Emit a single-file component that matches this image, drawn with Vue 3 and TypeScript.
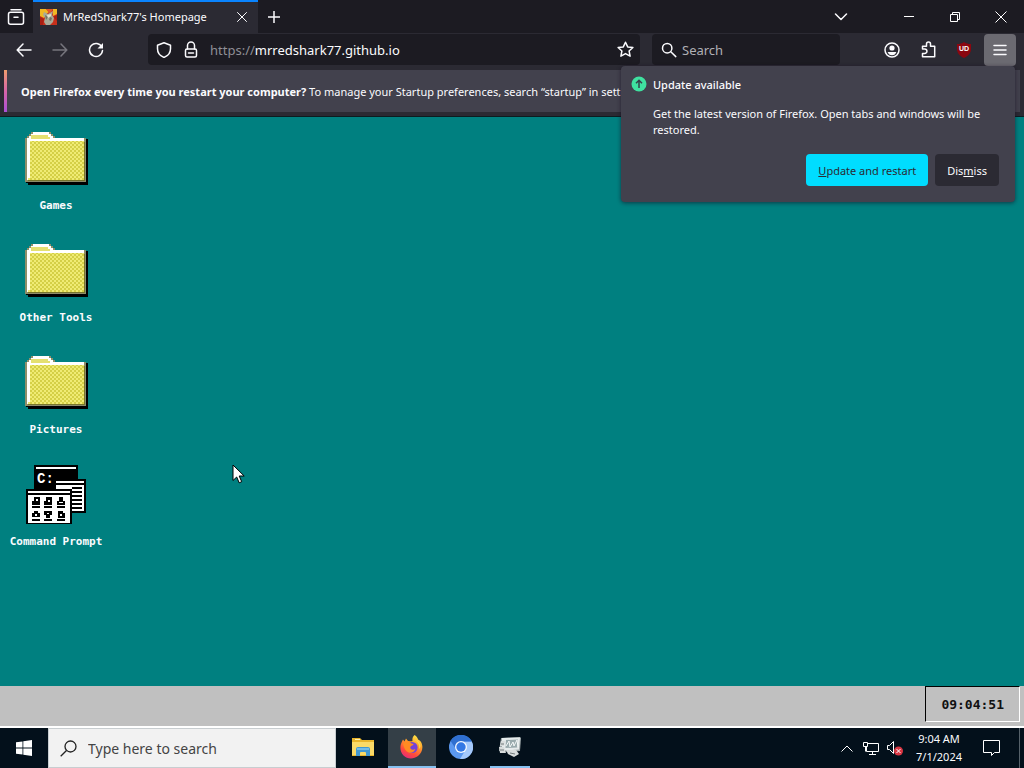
<script setup lang="ts">
import { ref } from 'vue'

interface DesktopItem {
  name: string
  kind: 'folder' | 'prompt'
}

const items: DesktopItem[] = [
  { name: 'Games', kind: 'folder' },
  { name: 'Other Tools', kind: 'folder' },
  { name: 'Pictures', kind: 'folder' },
  { name: 'Command Prompt', kind: 'prompt' },
]

const address = ref('mrredshark77.github.io')
const webQuery = ref('')
const taskQuery = ref('')
</script>

<template>
  <div class="screen">
    <header class="tabs">
      <button class="recent" aria-label="Recent browsing">
        <svg width="18" height="18" viewBox="0 0 18 18" class="line">
          <path d="M4 1.700h10" />
          <rect x="1.500" y="4.200" width="15" height="12" rx="2" />
          <path d="M7 9.200h4" />
        </svg>
      </button>
      <div class="tab">
        <svg width="17" height="16" viewBox="0 0 17 16">
          <rect width="17" height="16" fill="#c8301c" />
          <path d="M0 0h6l3 3-3 2-2 4-4-2zM13 0h4v5l-4 2z" fill="#f0b824" />
          <path d="M6 0h7l-2 3-2 1z" fill="#e0552a" />
          <path d="M0 8l4 2-1 6H0zM13 8l4-2v6z" fill="#a91f12" />
          <path d="M4 3l4 2 5-3-1 4 2 3-1 4-3 3H6l-2-3 1-4-2-3z" fill="#a9ab98" />
          <path d="M5 6l3 2-2 3zM10 8l2 1-1 3-2-1z" fill="#6d7565" />
          <path d="M7 6l4-1v2l-3 2z" fill="#e6e2cd" />
        </svg>
        <span class="tab-title">MrRedShark77's Homepage</span>
        <button class="tab-close" aria-label="Close tab">
          <svg width="10" height="10" viewBox="0 0 10 10" class="line thin"><path d="M.5.5l9 9M9.500.5l-9 9" /></svg>
        </button>
      </div>
      <button class="new-tab" aria-label="New tab">
        <svg width="12" height="12" viewBox="0 0 12 12" class="line"><path d="M6 0v12M0 6h12" /></svg>
      </button>
      <button class="all-tabs" aria-label="List all tabs">
        <svg width="14" height="8" viewBox="0 0 14 8" class="line"><path d="M1.500 1L7 6.500 12.500 1" /></svg>
      </button>
      <button class="win" aria-label="Minimize">
        <svg width="10" height="10" viewBox="0 0 10 10" class="sharp"><path d="M0 4.500h10" /></svg>
      </button>
      <button class="win" aria-label="Restore">
        <svg width="10" height="10" viewBox="0 0 10 10" class="sharp"><path d="M.5 2.500h7v7h-7zM2.500 2.500v-2h7v7h-2" /></svg>
      </button>
      <button class="win" aria-label="Close">
        <svg width="12" height="12" viewBox="0 0 12 12" class="sharp"><path d="M.5.5l11 11M11.500.5l-11 11" /></svg>
      </button>
    </header>

    <nav class="toolbar">
      <button class="tool" aria-label="Back">
        <svg width="16" height="14" viewBox="0 0 16 14" class="line"><path d="M15 7H1.500M7 1L1.200 7 7 13" /></svg>
      </button>
      <button class="tool" aria-label="Forward" disabled>
        <svg width="16" height="14" viewBox="0 0 16 14" class="line dim"><path d="M1 7h13.500M9 1l5.800 6L9 13" /></svg>
      </button>
      <button class="tool" aria-label="Reload">
        <svg width="16" height="16" viewBox="0 0 16 16" class="line">
          <path d="M13.800 5A6.500 6.500 0 1 0 14.500 8.500" />
          <path d="M15 1v5.500H9.500z" class="solid" />
        </svg>
      </button>
      <div class="address">
        <svg width="16" height="16" viewBox="0 0 16 16" class="line">
          <path d="M8 .8l6.500 2.400v3.600C14.500 11 12 14 8 15.400 4 14 1.500 11 1.500 6.800V3.200z" />
        </svg>
        <svg width="14" height="17" viewBox="0 0 14 17" class="line">
          <rect x="1.500" y="8" width="11" height="8" rx="1.500" />
          <path d="M3.500 8V4.500a3.500 3.500 0 0 1 7 0V8M4.500 12h5" />
        </svg>
        <label class="field"><span class="scheme">https://</span><input v-model="address" aria-label="Address" /></label>
        <button class="star" aria-label="Bookmark this page">
          <svg width="17" height="17" viewBox="0 0 17 17" class="line">
            <path d="M8.500 1.200l2.200 4.700 5.200.6-3.800 3.500 1 5.200-4.600-2.600-4.600 2.600 1-5.200L1.100 6.500l5.200-.6z" />
          </svg>
        </button>
      </div>
      <label class="find">
        <svg width="16" height="16" viewBox="0 0 16 16" class="line"><circle cx="6.200" cy="6.200" r="4.700" /><path d="M9.800 9.800l5 4.800" /></svg>
        <input v-model="webQuery" placeholder="Search" aria-label="Search the web" />
      </label>
      <button class="tool" aria-label="Account">
        <svg width="16" height="16" viewBox="0 0 16 16" class="line">
          <circle cx="8" cy="8" r="7" />
          <circle cx="8" cy="6" r="2.600" class="fill" />
          <path d="M3.600 10h8.800c-.6 2-2.300 3.300-4.400 3.300S4.200 12 3.600 10z" class="fill" />
        </svg>
      </button>
      <button class="tool" aria-label="Extensions">
        <svg width="15" height="17" viewBox="0 0 15 17" class="line">
          <path d="M1.500 8V5.200h4V3a2 2 0 0 1 4 0v2.200h4.200v10.600H1.500v-3.300h2.200a2.200 2.200 0 0 0 0-4.500z" />
        </svg>
      </button>
      <button class="tool" aria-label="uBlock Origin">
        <svg width="16" height="16" viewBox="0 0 16 16">
          <path d="M8 0c2 1.400 4 2 7 2v5c0 4-2.500 7-7 9-4.500-2-7-5-7-9V2c3 0 5-.6 7-2z" fill="#8b0710" />
          <text x="8" y="9" class="shield">UD</text>
        </svg>
      </button>
      <button class="tool open" aria-label="Open menu">
        <svg width="14" height="12" viewBox="0 0 14 12" class="line"><path d="M1 1.500h12M1 6h12M1 10.500h12" /></svg>
      </button>

      <section class="doorhanger" role="dialog" aria-label="Update available">
        <svg class="badge" width="16" height="16" viewBox="0 0 16 16">
          <circle cx="8" cy="8" r="7.500" fill="#3fe1a0" />
          <path d="M8 12V4.500M5 7.300l3-3 3 3" fill="none" stroke="#35404a" stroke-width="1.500" />
        </svg>
        <div class="news">
          <h2>Update available</h2>
          <p>Get the latest version of Firefox. Open tabs and windows will be restored.</p>
          <div class="actions">
            <button class="primary"><span><u>U</u>pdate and restart</span></button>
            <button class="secondary"><span>Dis<u>m</u>iss</span></button>
          </div>
        </div>
      </section>
    </nav>

    <aside class="notice">
      <div class="notice-box">
        <p><strong>Open Firefox every time you restart your computer?</strong> To manage your Startup preferences, search “startup” in settings.</p>
      </div>
    </aside>

    <main class="desktop">
      <button v-for="item in items" :key="item.name" class="item">
        <svg v-if="item.kind === 'folder'" width="64" height="64" viewBox="0 0 64 64" shape-rendering="crispEdges">
          <defs>
            <pattern :id="'dither-' + item.name.charAt(0)" width="4" height="4" patternUnits="userSpaceOnUse">
              <rect width="4" height="4" fill="#efeb74" />
              <path d="M0 0h2v2H0zM2 2h2v2H2z" fill="#d4cf46" />
            </pattern>
          </defs>
          <path d="M62 15h2v46H4v-2H2v-2h60z" fill="#000" />
          <path d="M1 14h2v-2h2v-2h2V8h20v2h2v2h2v2h31v44H1z" fill="#8e8e6a" />
          <path d="M3 14h2v-2h2v-2h2V8h16v2h2v2h2v2h31v3H6v39H3z" fill="#fff" />
          <path d="M7 11h17v2h2v2H7z" fill="#e4e070" />
          <path d="M6 17h54v39H4v-2h2z" :fill="'url(#dither-' + item.name.charAt(0) + ')'" />
          <path d="M60 18h1v39H4v-1h56z" fill="#77752c" />
        </svg>
        <svg v-else width="64" height="64" viewBox="0 0 64 64" shape-rendering="crispEdges">
          <path d="M10 5h44v26H10z" fill="#000" />
          <path d="M12 7h40v2H12z" fill="#fff" />
          <text x="13" y="23" class="drive">C:</text>
          <path d="M32 19h30v34H32z" fill="#000" />
          <path d="M32 21h28v2H32zM32 25h28v26H32z" fill="#fff" />
          <path d="M48 27h10v2H48zM48 31h10v2H48zM48 35h10v2H48zM48 39h10v2H48zM48 43h10v2H48zM48 47h10v2H48z" fill="#000" />
          <path d="M2 29h46v36H2z" fill="#000" />
          <path d="M4 31h42v2H4zM4 35h42v28H4z" fill="#fff" />
          <path d="M10 37h6v8H8v-4h2zM22 37h6v8h-8v-4h2zM35 37h4v4h2v4h-8v-4h2zM8 46h8v2H8zM20 46h8v2h-8zM33 46h8v2h-8zM10 51h4v2h2v4H8v-4h2zM20 51h8v4h-2v3h-4v-3h-2zM34 51h5v2h2v5h-7zM8 59h8v2H8zM20 59h8v2h-8zM33 59h8v2h-8z" fill="#000" />
          <path d="M12 39h2v2h-2zM24 40h2v2h-2zM35 42h4v1h-4zM11 54h2v2h-2zM23 53h2v1h-2zM36 54h2v2h-2z" fill="#fff" />
        </svg>
        <span>{{ item.name }}</span>
      </button>
      <svg class="pointer" width="13" height="20" viewBox="0 0 13 20">
        <path d="M1 1v15.500l3.700-3.500 2.500 5.800 2.500-1.100L7.200 12h5z" fill="#fff" stroke="#000" />
      </svg>
    </main>

    <div class="page-bar"><time>09:04:51</time></div>

    <footer class="taskbar">
      <button class="start" aria-label="Start">
        <svg width="16" height="16" viewBox="0 0 16 16" fill="#fff">
          <path d="M0 2.300l6.500-.9v6.200H0zM7.300 1.300L16 0v7.600H7.300zM0 8.400h6.500v6.200L0 13.700zM7.300 8.400H16V16l-8.700-1.300z" />
        </svg>
      </button>
      <label class="task-search">
        <svg width="17" height="17" viewBox="0 0 17 17"><circle cx="10.500" cy="6.500" r="5.500" /><path d="M6.500 10.500L.7 16.300" /></svg>
        <input v-model="taskQuery" placeholder="Type here to search" aria-label="Type here to search" />
      </label>
      <button class="app" aria-label="File Explorer">
        <svg width="22" height="20" viewBox="0 0 22 20">
          <path d="M0 1h8l2 2h12v16H0z" fill="#e9b52c" />
          <path d="M0 5h22v13H0z" fill="#fbda68" />
          <path d="M3 2h5v1H3z" fill="#fff3b0" />
          <path d="M4 19v-7q0-2 2-2h10q2 0 2 2v7h-4v-3q0-1-1-1H9q-1 0-1 1v3z" fill="#4298d2" />
          <path d="M5 11h12v2H5z" fill="#73bce8" />
        </svg>
      </button>
      <button class="app active" aria-label="Firefox">
        <svg width="24" height="24" viewBox="0 0 24 24">
          <defs>
            <linearGradient id="flame" x1=".8" y1="0" x2=".3" y2="1">
              <stop offset="0" stop-color="#fff04a" /><stop offset=".4" stop-color="#ff9a2a" />
              <stop offset=".75" stop-color="#ff4a3c" /><stop offset="1" stop-color="#e62c78" />
            </linearGradient>
          </defs>
          <path d="M14.500 0c2.300 1.400 3.200 3 3.700 4.800C17 4 20 5 21 7c3 5.500.8 11-3 14-4.500 3.500-11 3-14.500-.5C-.5 16.500-.2 10.500 2 6.500l1-2 1.500 2L6 3.500 8 6c2 .2 3 .3 4.500 0C12 3.500 13 1.500 14.500 0z" fill="url(#flame)" />
          <circle cx="12" cy="12.500" r="5.600" fill="#7542d8" />
          <path d="M3 9c2-2.500 4-3 6-2.500l2.500 2c1 .2 2 .3 2 .8 0 1.200-2.500 1.200-3.200 2.700-.3 2.500 2.500 3.500 5 2-1 4-6 5-9 2C4 14 4 11 3 9z" fill="#ff8b22" />
          <path d="M14 5c4 1 6 5 5 9 1-1 1.500-2 1.500-3C20 7 17 5 14 5z" fill="#ffd84a" />
        </svg>
      </button>
      <button class="app" aria-label="Chromium">
        <svg width="24" height="24" viewBox="0 0 24 24">
          <circle cx="12" cy="12" r="12" fill="#5b98f0" />
          <path d="M12 6.500h10.700A12 12 0 0 1 11 24l5.500-9z" fill="#a5c9fb" />
          <path d="M1.600 6A12 12 0 0 1 22.700 6.500H12L7 14z" fill="#2f6fd0" />
          <circle cx="12" cy="12" r="6" fill="#f4f8ff" />
          <circle cx="12" cy="12" r="4.700" fill="#3478e4" />
        </svg>
      </button>
      <button class="app running" aria-label="System monitor">
        <svg width="24" height="22" viewBox="0 0 24 22">
          <path d="M3 2l19-1 1 1-1 13-10 1-11-1z" fill="#9fa8aa" />
          <path d="M4 2l18-.5-1 12-17 1z" fill="#e6ebec" />
          <path d="M8 4l12-.5-.8 8L7.500 12z" fill="#9aabae" />
          <path d="M8 10l3-5 1 6 3-5 1 4 3-6 1 7" fill="none" stroke="#f4f8f8" />
          <path d="M3 5h4l-1 5H2zM1 11h5l2 6H2zM8 14h10l3 4-5 3-6-3z" fill="#d9dddd" />
          <path d="M3 8h3M2 14h4M12 17l5 1" stroke="#727a7c" />
        </svg>
      </button>
      <div class="tray">
        <button aria-label="Show hidden icons">
          <svg width="12" height="7" viewBox="0 0 12 7" class="sharp"><path d="M.5 6.500L6 1l5.500 5.500" /></svg>
        </button>
        <button aria-label="Network">
          <svg width="16" height="14" viewBox="0 0 16 14" class="sharp">
            <path d="M5 2.500h10.500v8H3.500V6M.5 1.500h4v4h-4zM2.500 5.500v5M9.500 10.500v3M6 13.500h7" />
          </svg>
        </button>
        <button aria-label="Volume muted">
          <svg width="16" height="15" viewBox="0 0 16 15" class="sharp">
            <path d="M.5 4.500h2l4-4v12l-4-4h-2z" />
            <circle cx="11.500" cy="10" r="4.500" class="mute" />
            <path d="M9.500 8l4 4M13.500 8l-4 4" />
          </svg>
        </button>
        <button class="clock"><span>9:04 AM</span><span>7/1/2024</span></button>
        <button class="centre" aria-label="Notifications">
          <svg width="17" height="16" viewBox="0 0 17 16" class="sharp"><path d="M.5.5h16v12h-5l-3 3v-3h-8z" /></svg>
        </button>
      </div>
    </footer>
  </div>
</template>

<style>
body {
  margin: 0;
  background: #008080;
}
</style>

<style scoped>
.screen {
  display: flex;
  flex-direction: column;
  min-height: 100vh;
  font-family: "Noto Sans", "Open Sans", sans-serif;
  font-size: 11px;
  color: #fbfbfe;
  overflow: hidden;
}
.screen * {
  box-sizing: border-box;
}
button {
  display: flex;
  align-items: center;
  justify-content: center;
  flex: none;
  margin: 0;
  padding: 0;
  border: 0;
  background: none;
  color: inherit;
  font: inherit;
}
input {
  min-width: 0;
  padding: 0;
  border: 0;
  outline: 0;
  background: none;
  color: inherit;
  font: inherit;
}
p,
h2 {
  margin: 0;
}
svg {
  display: block;
  flex: none;
}
.line {
  fill: none;
  stroke: #fbfbfe;
  stroke-width: 1.5;
  stroke-linecap: round;
  stroke-linejoin: round;
}
.thin {
  stroke-width: 1;
}
.dim {
  stroke: #77767e;
}
.solid,
.fill {
  fill: #fbfbfe;
  stroke: none;
}
.sharp {
  fill: none;
  stroke: #fff;
  stroke-width: 1;
}
.shield {
  fill: #fff;
  font-family: "Liberation Sans", sans-serif;
  font-size: 7px;
  font-weight: bold;
  text-anchor: middle;
}
.drive {
  fill: #fff;
  font-family: "Liberation Mono", monospace;
  font-size: 14px;
  font-weight: bold;
}
.tabs {
  display: flex;
  height: 33px;
  background: #1c1b22;
}
.recent {
  width: 32px;
  margin-right: 1px;
}
.tab {
  display: flex;
  align-items: center;
  width: 225px;
  padding: 0 4px 2px 7px;
  border-top: 2px solid #0a84ff;
  background: #2b2a33;
}
.tab-title {
  flex: 1;
  margin-left: 6px;
  white-space: nowrap;
}
.tab-close {
  width: 24px;
  height: 24px;
}
.new-tab {
  width: 32px;
}
.all-tabs {
  width: 32px;
  margin-left: auto;
  margin-right: 29px;
}
.win {
  width: 46px;
}
.toolbar {
  position: relative;
  z-index: 1;
  display: flex;
  align-items: center;
  gap: 4px;
  height: 36px;
  padding: 0 8px 3px;
  background: #2b2a33;
}
.tool {
  width: 32px;
  height: 32px;
}
.open {
  border-radius: 4px;
  background: #6b6a71;
}
.address {
  display: flex;
  align-items: center;
  flex: 1;
  gap: 12px;
  height: 31px;
  margin-left: 32px;
  padding: 0 6px 0 8px;
  border-radius: 4px;
  background: #1c1b22;
  font-size: 13px;
}
.field {
  display: flex;
  flex: 1;
  min-width: 0;
}
.field input {
  flex: 1;
}
.scheme {
  color: #8f8f96;
}
.find {
  display: flex;
  align-items: center;
  gap: 5px;
  width: 188px;
  height: 31px;
  margin: 0 32px 0 8px;
  padding: 0 9px;
  border-radius: 4px;
  background: #1c1b22;
  font-size: 13px;
}
.find input {
  flex: 1;
}
.find input::placeholder {
  color: #b0b0b5;
  opacity: 1;
}
.doorhanger {
  position: absolute;
  top: 33px;
  right: 9px;
  display: flex;
  gap: 6px;
  width: 394px;
  padding: 10px 16px 16px 10px;
  border-radius: 4px;
  background: #42414d;
  box-shadow: 0 1px 4px rgba(20, 10, 30, 0.6);
}
.news {
  flex: 1;
}
h2 {
  font-size: 11px;
  font-weight: 500;
  line-height: 18px;
}
.news p {
  margin-top: 12px;
  line-height: 16px;
}
.actions {
  display: flex;
  justify-content: flex-end;
  gap: 7px;
  margin-top: 16px;
}
.actions button {
  height: 32px;
  padding: 0 12px;
  border-radius: 4px;
}
.primary {
  background: #00ddff;
  color: #2b2a33;
}
.secondary {
  background: #2b2a33;
}
.notice {
  padding: 1px 4px 4px;
  border-bottom: 1px solid #0c1c20;
  background: #2b2a33;
}
.notice-box {
  padding: 1px 395px 0 14px;
  border-left: 3px solid;
  border-image: linear-gradient(#f0a06a, #d765a8, #a84fd8) 1;
  background: #42414d;
}
.notice p {
  line-height: 41px;
  white-space: nowrap;
  overflow: hidden;
}
.desktop {
  position: relative;
  display: flex;
  flex: 1;
  flex-direction: column;
  align-items: flex-start;
  background: #008080;
  padding-top: 7px;
}
.item {
  flex-direction: column;
  justify-content: flex-start;
  width: 112px;
  height: 112px;
  gap: 10px;
  font-family: "DejaVu Sans Mono", monospace;
  font-size: 11px;
  font-weight: bold;
  line-height: 16px;
}
.pointer {
  position: absolute;
  left: 232px;
  top: 347px;
}
.page-bar {
  display: flex;
  justify-content: flex-end;
  height: 42px;
  padding: 0 4px 4px 0;
  border-bottom: 2px solid #fff;
  background: #c0c0c0;
}
.page-bar time {
  display: flex;
  align-items: center;
  padding: 0 15px;
  border: 1px solid #fff;
  border-top-color: #000;
  border-left-color: #000;
  color: #111;
  font-family: "DejaVu Sans Mono", monospace;
  font-size: 13px;
  font-weight: bold;
}
.taskbar {
  display: flex;
  height: 40px;
  background: #03101b;
}
.start {
  width: 48px;
}
.task-search {
  display: flex;
  align-items: center;
  gap: 11px;
  width: 288px;
  margin-right: 3px;
  padding: 0 11px;
  border: 1px solid #c8cdd0;
  background: #f2f2f2;
  color: #333;
  font-size: 14px;
}
.task-search svg {
  fill: none;
  stroke: #222;
  stroke-width: 1.3;
}
.task-search input {
  flex: 1;
}
.task-search input::placeholder {
  color: #444;
  opacity: 1;
}
.app {
  width: 48px;
  margin-right: 1px;
  border-bottom: 2px solid transparent;
}
.active {
  border-bottom-color: #86c0f0;
  background: #343f47;
}
.running {
  width: 40px;
  margin-left: 4px;
  border-bottom-color: #86c0f0;
}
.tray {
  display: flex;
  margin-left: auto;
  padding-right: 4px;
}
.tray button {
  width: 24px;
}
.tray .clock {
  flex-direction: column;
  width: 64px;
  font-size: 11px;
  line-height: 18px;
}
.tray .centre {
  width: 49px;
  padding-right: 8px;
  border-right: 1px solid #56616a;
}
.mute {
  fill: #d93643;
  stroke: none;
}
</style>
